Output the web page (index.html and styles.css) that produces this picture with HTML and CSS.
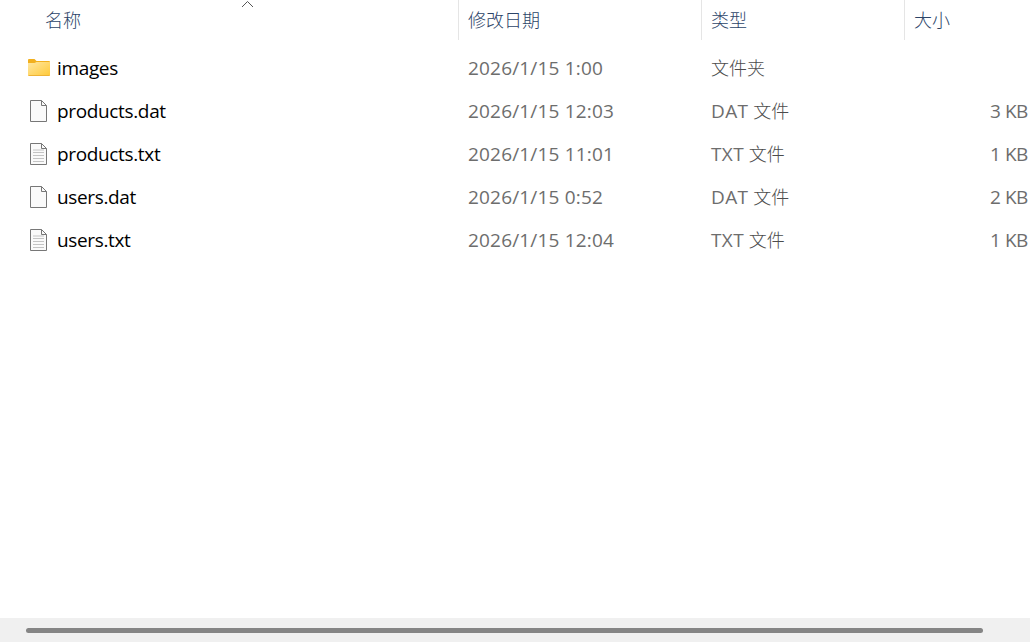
FILE: index.html
```html
<!DOCTYPE html>
<html lang="zh-CN">
  <head>
    <title>文件</title>
    <meta charset="utf-8">
    <meta name="viewport" content="width=device-width, initial-scale=1.0">
    <link rel="stylesheet" href="styles.css">
  </head>
  <body>
    <!-- Icon shapes shared by the rows -->
    <svg class="icon-defs" aria-hidden="true">
      <defs>
        <linearGradient id="folderFill" x1="0" y1="0" x2="1" y2="1">
          <stop offset="0" stop-color="#ffe7a2"/>
          <stop offset="1" stop-color="#ffc937"/>
        </linearGradient>
        <symbol id="folder" viewBox="0 0 24 24">
          <path d="M1 4Q1 3 2 3H7.500L9.500 5H22Q23 5 23 6V12H1Z" fill="#f2b01e"/>
          <path d="M1 7H7.500L9.500 6H23V19Q23 20 22 20H2Q1 20 1 19Z" fill="url(#folderFill)"/>
          <path d="M1.500 19.500H22.500" stroke="#eeb336"/>
        </symbol>
        <symbol id="file" viewBox="0 0 24 24">
          <path d="M3.500 1.500H14.500L19.500 6.500V22.500H3.500Z" fill="#fafafa" stroke="#777"/>
          <path d="M14.500 1.500V6.500H19.500" fill="none" stroke="#777"/>
        </symbol>
        <symbol id="text" viewBox="0 0 24 24">
          <use href="#file"/>
          <path d="M6 8H17M6 10.500H17M6 13.500H17M6 16.500H17M6 19.500H17" stroke="#c4c4c4"/>
        </symbol>
      </defs>
    </svg>

    <div class="explorer">
      <div class="header row">
        <div class="name">名称
          <svg class="sort" viewBox="0 0 12 8"><path d="M1 7L6.500 1.500L12 7"/></svg>
        </div>
        <div class="date">修改日期</div>
        <div class="type">类型</div>
        <div class="size">大小</div>
      </div>

      <div class="files">
        <div class="row">
          <div class="name"><svg class="icon"><use href="#folder"/></svg><span>images</span></div>
          <div class="date">2026/1/15 1:00</div>
          <div class="type">文件夹</div>
          <div class="size"></div>
        </div>
        <div class="row">
          <div class="name"><svg class="icon"><use href="#file"/></svg><span>products.dat</span></div>
          <div class="date">2026/1/15 12:03</div>
          <div class="type"><span class="ext">DAT</span> 文件</div>
          <div class="size">3 KB</div>
        </div>
        <div class="row">
          <div class="name"><svg class="icon"><use href="#text"/></svg><span>products.txt</span></div>
          <div class="date">2026/1/15 11:01</div>
          <div class="type"><span class="ext">TXT</span> 文件</div>
          <div class="size">1 KB</div>
        </div>
        <div class="row">
          <div class="name"><svg class="icon"><use href="#file"/></svg><span>users.dat</span></div>
          <div class="date">2026/1/15 0:52</div>
          <div class="type"><span class="ext">DAT</span> 文件</div>
          <div class="size">2 KB</div>
        </div>
        <div class="row">
          <div class="name"><svg class="icon"><use href="#text"/></svg><span>users.txt</span></div>
          <div class="date">2026/1/15 12:04</div>
          <div class="type"><span class="ext">TXT</span> 文件</div>
          <div class="size">1 KB</div>
        </div>
      </div>

      <div class="scrollbar"><div class="thumb"></div></div>
    </div>
  </body>
</html>
```

FILE: styles.css
```css
* {
  margin: 0;
  padding: 0;
  box-sizing: border-box;
}

body {
  font-family: "Open Sans", "Noto Sans CJK SC", sans-serif;
  font-size: 18px;
  font-weight: 300;
  background: #fff;
  color: #4c4c4c;
  overflow: hidden;
}

.icon-defs {
  position: absolute;
  width: 0;
  height: 0;
}

.explorer {
  height: 100vh;
  display: flex;
  flex-direction: column;
}

.row {
  display: grid;
  grid-template-columns: 459px 243px 203px 1fr;
  height: 43px;
  line-height: 43px;
  white-space: nowrap;
}

.date,
.type {
  padding-left: 9px;
}

/* Column headings */
.header {
  grid-template-rows: 40px;
  height: 40px;
  line-height: 41px;
  color: #2c4468;
}

.header > div {
  border-right: 1px solid #e5e5e5;
  padding-left: 9px;
}

.header .name {
  position: relative;
  padding-left: 45px;
}

.header .size {
  border-right: none;
}

.sort {
  position: absolute;
  left: 241px;
  top: 0;
  width: 12px;
  height: 8px;
  fill: none;
  stroke: #555;
}

/* File rows */
.files {
  flex: 1;
  padding-top: 7px;
}

.files .name {
  display: flex;
  align-items: center;
  padding-left: 27px;
  font-size: 19px;
  font-weight: 400;
  letter-spacing: -0.35px;
  color: #000;
}

.files .date {
  font-size: 19px;
  font-weight: 400;
  letter-spacing: 0.18px;
  color: #6d6d6d;
}

.files .ext {
  font-size: 19px;
  font-weight: 400;
  letter-spacing: 0.4px;
  color: #6d6d6d;
}

.files .size {
  text-align: right;
  padding-right: 2px;
  font-size: 19px;
  font-weight: 400;
  letter-spacing: -0.4px;
  color: #6d6d6d;
}

.icon {
  width: 24px;
  height: 24px;
  margin: 0 6px 1px 0;
}

/* Horizontal scrollbar */
.scrollbar {
  height: 24px;
  padding: 10px 47px 0 26px;
  background: #f0f0f0;
}

.thumb {
  height: 5px;
  border-radius: 3px;
  background: #858585;
}
```
